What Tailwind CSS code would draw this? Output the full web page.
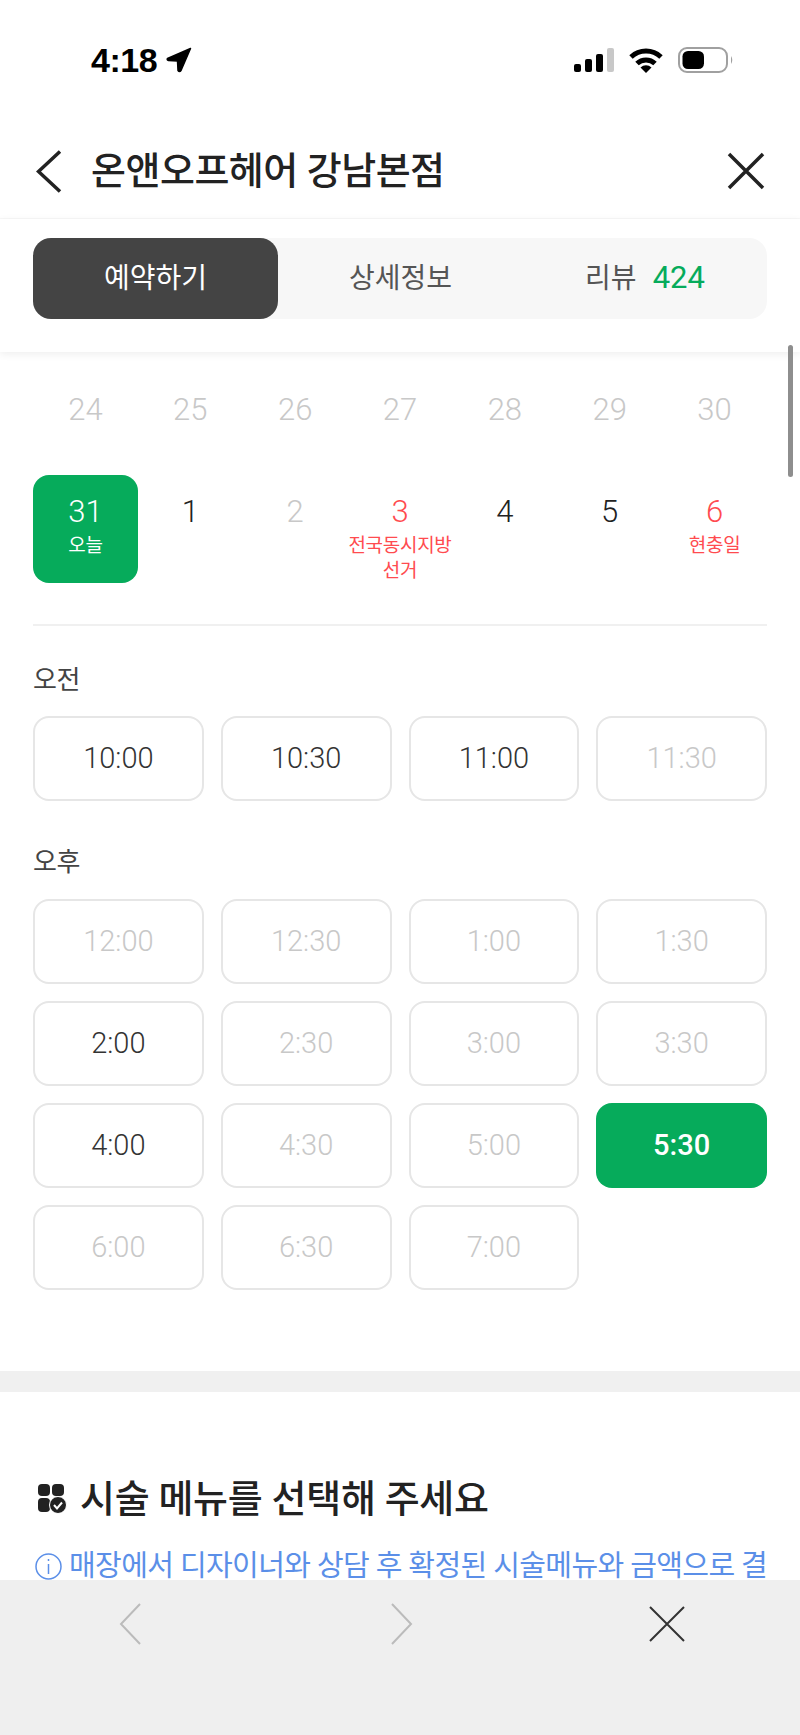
<!DOCTYPE html>
<html lang="ko">
<head>
<meta charset="UTF-8">
<meta name="viewport" content="width=device-width, initial-scale=1.0">
<title>온앤오프헤어 강남본점</title>
<script src="https://cdn.jsdelivr.net/npm/@tailwindcss/browser@4"></script>
</head>
<body class="bg-white [font-family:Roboto,'Noto_Sans_CJK_KR',sans-serif]">
<div class="relative w-[800px] h-[1735px] overflow-hidden bg-white">

  <!-- status bar -->
  <div class="h-[120px] pt-[41px] pl-[91px] pr-[66px] flex justify-between items-start">
    <div class="flex items-center gap-[9px] h-[38px]">
      <span class="text-[34px] font-bold tracking-[-0.5px] text-black [font-family:'Liberation_Sans',sans-serif]">4:18</span>
      <svg width="26" height="26" viewBox="0 0 26 26"><path d="M24.500 1.500 L1.500 11.500 Q0.500 13 2.500 13.500 L11.500 14 L12 23.500 Q13.500 25.500 15 23.500 Z" fill="#000" stroke="#000" stroke-width="1.500" stroke-linejoin="round"/></svg>
    </div>
    <div class="flex items-center gap-[15px] h-[38px]">
      <svg width="40" height="24" viewBox="0 0 40 24">
        <rect x="0" y="16" width="7" height="8" rx="2" fill="#000"/>
        <rect x="11" y="11" width="7" height="13" rx="2" fill="#000"/>
        <rect x="22" y="6" width="7" height="18" rx="2" fill="#000"/>
        <rect x="33" y="0" width="7" height="24" rx="2" fill="#c8c8c8"/>
      </svg>
      <svg width="34" height="25" viewBox="0 0 34 25">
        <path d="M2 9 A22 22 0 0 1 32 9" fill="none" stroke="#000" stroke-width="5"/>
        <path d="M8 15.500 A13 13 0 0 1 26 15.500" fill="none" stroke="#000" stroke-width="5"/>
        <path d="M17 25 L11.500 19.500 A8 8 0 0 1 22.500 19.500 Z" fill="#000"/>
      </svg>
      <svg width="56" height="26" viewBox="0 0 56 26">
        <rect x="1" y="1" width="48" height="24" rx="8" fill="none" stroke="#a0a0a0" stroke-width="2"/>
        <rect x="4.500" y="4" width="21.500" height="18" rx="5.500" fill="#000"/>
        <path d="M53 9 Q55.500 13 53 17 Z" fill="#a0a0a0"/>
      </svg>
    </div>
  </div>

  <!-- header -->
  <div class="h-[99px] pl-[36px] pr-[35px] pt-[4px] flex items-center justify-between border-b border-[#f8f8f8]">
    <div class="flex items-center gap-[29px]">
      <svg width="26" height="43" viewBox="0 0 26 43"><path d="M24 1.500 L2.500 21.500 L24 41.500" fill="none" stroke="#222" stroke-width="3.500"/></svg>
      <h1 class="text-[38px] font-medium tracking-[-0.5px] text-[#222]">온앤오프헤어 강남본점</h1>
    </div>
    <svg width="38" height="38" viewBox="0 0 38 38"><path d="M2 2 L36 36 M36 2 L2 36" stroke="#222" stroke-width="3.500" fill="none"/></svg>
  </div>

  <!-- tabs -->
  <div class="h-[133px] px-[33px] pt-[19px] shadow-[0_2px_8px_rgba(0,0,0,0.07)] relative bg-white">
    <div class="h-[81px] rounded-[18px] bg-[#f7f7f7] flex items-center">
      <div class="w-[245px] h-full rounded-[18px] bg-[#444] text-white text-[28px] flex items-center justify-center">예약하기</div>
      <div class="w-[245px] text-[#555] text-[28px] text-center">상세정보</div>
      <div class="flex-1 flex items-center justify-center gap-[16px] text-[28px] text-[#555]">
        <span>리뷰</span><span class="text-[#06ab5b] text-[31px]">424</span>
      </div>
    </div>
  </div>

  <!-- calendar -->
  <div class="px-[33px]">
    <div class="grid grid-cols-7 h-[123px] items-start pt-[40px] text-[31px] font-light text-[#c8c8c8] text-center leading-[36px]">
      <div>24</div><div>25</div><div>26</div><div>27</div><div>28</div><div>29</div><div>30</div>
    </div>
    <div class="grid grid-cols-7 text-center h-[151px] border-b-2 border-[#f0f0f0] items-start">
      <div class="h-[108px] rounded-[16px] bg-[#06ab5b] text-white pt-[19px]">
        <div class="text-[31px] font-light leading-[36px]">31</div>
        <div class="text-[19px] leading-[25px] tracking-[-0.3px] mt-[3px]">오늘</div>
      </div>
      <div class="pt-[19px] text-[31px] font-light leading-[36px] text-[#222]">1</div>
      <div class="pt-[19px] text-[31px] font-light leading-[36px] text-[#c8c8c8]">2</div>
      <div class="pt-[19px] text-[#ff4b4f]">
        <div class="text-[31px] font-light leading-[36px]">3</div>
        <div class="text-[19px] leading-[25px] tracking-[-0.3px] mt-[3px]">전국동시지방<br>선거</div>
      </div>
      <div class="pt-[19px] text-[31px] font-light leading-[36px] text-[#222]">4</div>
      <div class="pt-[19px] text-[31px] font-light leading-[36px] text-[#222]">5</div>
      <div class="pt-[19px] text-[#ff4b4f]">
        <div class="text-[31px] font-light leading-[36px]">6</div>
        <div class="text-[19px] leading-[25px] tracking-[-0.3px] mt-[3px]">현충일</div>
      </div>
    </div>

    <!-- times -->
    <div class="text-[26px] text-[#444] tracking-[-0.3px] leading-[36px] mt-[36px]">오전</div>
    <div class="grid grid-cols-4 gap-[17px] mt-[18px] text-[29px] font-light text-center">
      <div class="h-[85px] rounded-[16px] border-2 border-[#e6e6e6] flex items-center justify-center text-[#333]">10:00</div>
      <div class="h-[85px] rounded-[16px] border-2 border-[#e6e6e6] flex items-center justify-center text-[#333]">10:30</div>
      <div class="h-[85px] rounded-[16px] border-2 border-[#e6e6e6] flex items-center justify-center text-[#333]">11:00</div>
      <div class="h-[85px] rounded-[16px] border-2 border-[#e6e6e6] flex items-center justify-center text-[#c8c8c8]">11:30</div>
    </div>
    <div class="text-[26px] text-[#444] tracking-[-0.3px] leading-[36px] mt-[43px]">오후</div>
    <div class="grid grid-cols-4 gap-[17px] mt-[19px] text-[29px] font-light text-center">
      <div class="h-[85px] rounded-[16px] border-2 border-[#e6e6e6] flex items-center justify-center text-[#c8c8c8]">12:00</div>
      <div class="h-[85px] rounded-[16px] border-2 border-[#e6e6e6] flex items-center justify-center text-[#c8c8c8]">12:30</div>
      <div class="h-[85px] rounded-[16px] border-2 border-[#e6e6e6] flex items-center justify-center text-[#c8c8c8]">1:00</div>
      <div class="h-[85px] rounded-[16px] border-2 border-[#e6e6e6] flex items-center justify-center text-[#c8c8c8]">1:30</div>
      <div class="h-[85px] rounded-[16px] border-2 border-[#e6e6e6] flex items-center justify-center text-[#333]">2:00</div>
      <div class="h-[85px] rounded-[16px] border-2 border-[#e6e6e6] flex items-center justify-center text-[#c8c8c8]">2:30</div>
      <div class="h-[85px] rounded-[16px] border-2 border-[#e6e6e6] flex items-center justify-center text-[#c8c8c8]">3:00</div>
      <div class="h-[85px] rounded-[16px] border-2 border-[#e6e6e6] flex items-center justify-center text-[#c8c8c8]">3:30</div>
      <div class="h-[85px] rounded-[16px] border-2 border-[#e6e6e6] flex items-center justify-center text-[#333]">4:00</div>
      <div class="h-[85px] rounded-[16px] border-2 border-[#e6e6e6] flex items-center justify-center text-[#c8c8c8]">4:30</div>
      <div class="h-[85px] rounded-[16px] border-2 border-[#e6e6e6] flex items-center justify-center text-[#c8c8c8]">5:00</div>
      <div class="h-[85px] rounded-[16px] bg-[#06ab5b] flex items-center justify-center text-white font-medium">5:30</div>
      <div class="h-[85px] rounded-[16px] border-2 border-[#e6e6e6] flex items-center justify-center text-[#c8c8c8]">6:00</div>
      <div class="h-[85px] rounded-[16px] border-2 border-[#e6e6e6] flex items-center justify-center text-[#c8c8c8]">6:30</div>
      <div class="h-[85px] rounded-[16px] border-2 border-[#e6e6e6] flex items-center justify-center text-[#c8c8c8]">7:00</div>
    </div>
  </div>

  <!-- gray band -->
  <div class="h-[21px] bg-[#f0f0f0] mt-[81px]"></div>

  <!-- menu section -->
  <div class="px-[33px] pt-[84px]">
    <div class="flex items-center gap-[13px] h-[46px]">
      <svg width="34" height="32" viewBox="0 0 34 32">
        <rect x="5" y="1" width="12" height="12" rx="4" fill="#222"/>
        <rect x="19" y="1" width="12" height="12" rx="4" fill="#222"/>
        <rect x="5" y="15" width="12" height="14" rx="4" fill="#222"/>
        <circle cx="25" cy="22" r="8.500" fill="#222" stroke="#fff" stroke-width="1"/>
        <path d="M21 22 L24 25.500 L29 19.500" fill="none" stroke="#fff" stroke-width="2"/>
      </svg>
      <h2 class="text-[38px] font-medium tracking-[-0.3px] text-[#222]">시술 메뉴를 선택해 주세요</h2>
    </div>
    <div class="flex items-center gap-[7px] mt-[23px] text-[#5b8fe8] text-[29px] tracking-[-0.6px] whitespace-nowrap">
      <svg class="shrink-0 ml-[2px]" width="27" height="27" viewBox="0 0 27 27">
        <circle cx="13.500" cy="13.500" r="12.500" fill="none" stroke="#5b8fe8" stroke-width="1.500"/>
        <path d="M13.500 11 V21 M13.500 6 V8" stroke="#5b8fe8" stroke-width="1.500"/>
      </svg>
      <span>매장에서 디자이너와 상담 후 확정된 시술메뉴와 금액으로 결</span>
    </div>
  </div>

  <!-- scrollbar -->
  <div class="absolute left-[788px] top-[345px] w-[5px] h-[132px] rounded-full bg-[#8e8e8e]"></div>

  <!-- browser toolbar -->
  <div class="absolute left-0 right-0 bottom-0 h-[155px] bg-[#efefef] flex items-start pt-[23px]">
    <svg class="ml-[119px]" width="22" height="42" viewBox="0 0 22 42"><path d="M21 1 L2 21 L21 41" fill="none" stroke="#bbb" stroke-width="2"/></svg>
    <svg class="ml-[250px]" width="22" height="42" viewBox="0 0 22 42"><path d="M1 1 L20 21 L1 41" fill="none" stroke="#bbb" stroke-width="2"/></svg>
    <svg class="ml-[236px] mt-[3px]" width="36" height="36" viewBox="0 0 36 36"><path d="M1 1 L35 35 M35 1 L1 35" fill="none" stroke="#333" stroke-width="2"/></svg>
  </div>
</div>
</body>
</html>
